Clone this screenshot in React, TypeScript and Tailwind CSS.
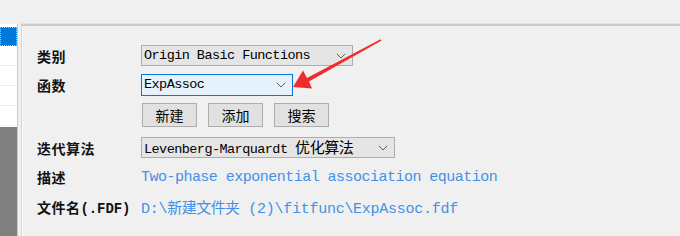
import React from "react";

const mono = "font-['Liberation_Mono','Noto_Sans_CJK_SC',monospace]";
const cjk = "font-['Noto_Sans_CJK_SC','Noto_Sans',sans-serif]";

const Chevron = () => (
  <svg width="10" height="6" viewBox="0 0 10 6" className="shrink-0">
    <polyline points="0.8,0.8 5,5 9.2,0.8" fill="none" stroke="#5f5f5f" strokeWidth="1" />
  </svg>
);

const Select: React.FC<{ width: string; active?: boolean; children: React.ReactNode }> = ({
  width,
  active,
  children,
}) => (
  <div
    className={`${width} flex items-center justify-between border pl-[2px] pr-[6px] ${
      active ? "border-[#0078d7] bg-[#e5f1fb] h-[22px]" : "border-[#adadad] bg-[#e5e5e5] h-[21px]"
    }`}
  >
    <span className={`${mono} text-[13.5px] tracking-[-0.55px] text-black leading-none whitespace-nowrap`}>
      {children}
    </span>
    <Chevron />
  </div>
);

const Btn: React.FC<{ children: React.ReactNode }> = ({ children }) => (
  <div
    className={`${cjk} w-[55px] h-[24px] flex items-center justify-center border border-[#adadad] bg-[#e1e1e1] text-[14px] text-black leading-none`}
  >
    {children}
  </div>
);

const Label: React.FC<{ children: React.ReactNode }> = ({ children }) => (
  <div className={`${cjk} w-[104px] shrink-0 text-[14px] font-bold tracking-[0.5px] text-[#111] leading-none`}>
    {children}
  </div>
);

export default function App() {
  return (
    <div className="relative w-[680px] h-[236px] overflow-hidden bg-[#f0f0f0] flex">
      {/* left list strip */}
      <div className="w-[21px] shrink-0 flex flex-col">
        <div className="h-[24px]" />
        <div className="flex-1 flex">
          <div className="w-[18px] flex flex-col border-r border-[#c8c8c8] bg-white">
            <div className="h-[3px]" />
            <div className="h-[19px] bg-[#0078d7] border border-dotted border-[#9cc8f0]" />
            <div className="h-[20px] border-b border-[#ededed]" />
            <div className="h-[20px] border-b border-[#ededed]" />
            <div className="h-[20px] border-b border-[#ededed]" />
            <div className="h-[21px]" />
            <div className="flex-1 bg-[#808080]" />
          </div>
        </div>
      </div>

      {/* main panel */}
      <div className="flex-1 flex flex-col">
        <div className="h-[23px]" />
        <div className="h-[1px] bg-[#e2e2e2]" />
        <div className="h-[2px] bg-[#cbcbcb]" />
        <div className="flex-1 flex">
          <div className="w-[1px] bg-[#d6d6d6]" />
          <div className="w-[1px] bg-[#fafafa]" />
          <div className="flex-1 flex flex-col pl-[14px] pt-[19px]">
            <div className="flex items-center h-[21px]">
              <Label>类别</Label>
              <Select width="w-[212px]">Origin Basic Functions</Select>
            </div>
            <div className="flex items-center h-[22px] mt-[8px]">
              <Label>函数</Label>
              <Select width="w-[152px]" active>
                ExpAssoc
              </Select>
            </div>
            <div className="flex items-center h-[24px] mt-[7px]">
              <div className="w-[105px] shrink-0" />
              <div className="flex gap-[11px]">
                <Btn>新建</Btn>
                <Btn>添加</Btn>
                <Btn>搜索</Btn>
              </div>
            </div>
            <div className="flex items-center h-[21px] mt-[10px]">
              <Label>迭代算法</Label>
              <Select width="w-[254px]">
                Levenberg-Marquardt{" "}
                <span className={`${cjk} text-[15px] tracking-[-0.4px]`}>优化算法</span>
              </Select>
            </div>
            <div className="flex items-center h-[20px] mt-[9px]">
              <Label>描述</Label>
              <span
                className={`${mono} text-[15px] tracking-[-0.52px] text-[#4390e8] leading-none whitespace-nowrap`}
              >
                Two-phase exponential association equation
              </span>
            </div>
            <div className="flex items-center h-[20px] mt-[11px]">
              <Label>
                文件名
                <span className={`${mono} text-[14px] tracking-[-0.1px]`}>(.FDF)</span>
              </Label>
              <span
                className={`${mono} text-[15px] tracking-[-0.27px] text-[#4390e8] leading-none whitespace-nowrap`}
              >
                D:\<span className={`${cjk} tracking-[-0.52px]`}>新建文件夹</span> (2)\fitfunc\ExpAssoc.fdf
              </span>
            </div>
          </div>
        </div>
      </div>

      {/* annotation arrow */}
      <svg className="absolute left-0 top-0 pointer-events-none" width="680" height="236" viewBox="0 0 680 236">
        <polygon
          points="293,87 312,88.5 309,81.5 381.6,40.6 380.6,39.2 307,78 303,70.5"
          fill="#ef2b2b"
        />
      </svg>
    </div>
  );
}
